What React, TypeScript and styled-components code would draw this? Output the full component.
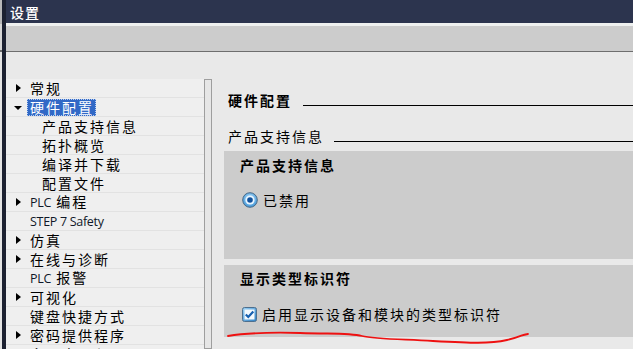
import styled, { createGlobalStyle } from 'styled-components'
import { ReactNode } from 'react'

const GlobalStyle = createGlobalStyle`
  html, body {
    margin: 0;
    padding: 0;
    overflow: hidden;
    background: #e9e9e9;
  }
  body {
    font-family: "Noto Sans CJK SC", "Noto Sans", sans-serif;
  }
`

const CJK = `"Noto Sans CJK SC", "Noto Sans", sans-serif`

interface NavItem {
  label: ReactNode
  arrow?: 'right' | 'down'
  child?: boolean
  selected?: boolean
}

function getNavItems(): NavItem[] {
  return [
    { label: '常规', arrow: 'right' },
    { label: '硬件配置', arrow: 'down', selected: true },
    { label: '产品支持信息', child: true },
    { label: '拓扑概览', child: true },
    { label: '编译并下载', child: true },
    { label: '配置文件', child: true },
    { label: <><Latin>PLC</Latin> 编程</>, arrow: 'right' },
    { label: <Latin>STEP 7 Safety</Latin> },
    { label: '仿真', arrow: 'right' },
    { label: '在线与诊断', arrow: 'right' },
    { label: <><Latin>PLC</Latin> 报警</> },
    { label: '可视化', arrow: 'right' },
    { label: '键盘快捷方式' },
    { label: '密码提供程序', arrow: 'right' },
    { label: '多用户工程', arrow: 'right' },
  ]
}

export default function App() {
  const navItems = getNavItems()
  return (
    <Page>
      <GlobalStyle />
      <Gutter />
      <Window>
        <TitleBar>
          <Title>设置</Title>
        </TitleBar>
        <Toolbar />
        <Body>
          <NavColumn>
            <NavList>
              {navItems.map((item, i) => (
                <NavRow key={i} $child={item.child}>
                  <Arrow>
                    {item.arrow === 'right' && <RightTriangle />}
                    {item.arrow === 'down' && <DownTriangle />}
                  </Arrow>
                  <NavLabel $selected={item.selected}>{item.label}</NavLabel>
                </NavRow>
              ))}
            </NavList>
            <ScrollThumb />
          </NavColumn>
          <Content>
            <SectionHeading>
              <HeadingText>硬件配置</HeadingText>
              <Rule />
            </SectionHeading>
            <SubHeading>
              <SubHeadingText>产品支持信息</SubHeadingText>
              <Rule />
            </SubHeading>
            <Group $height={108}>
              <GroupTitle>产品支持信息</GroupTitle>
              <OptionRow $gap={15}>
                <RadioIcon />
                <OptionText>已禁用</OptionText>
              </OptionRow>
            </Group>
            <Group $height={72} $top={6}>
              <GroupTitle $top={3}>显示类型标识符</GroupTitle>
              <OptionRow $gap={16}>
                <CheckIcon />
                <OptionText>启用显示设备和模块的类型标识符</OptionText>
              </OptionRow>
            </Group>
          </Content>
        </Body>
      </Window>
      <Annotation width="633" height="349" viewBox="0 0 633 349">
        <path
          d="M228 336 C 240 334, 262 332, 300 333 S 350 333, 362 336 S 395 339, 433 341 S 490 344, 507 340 S 520 335, 528 334"
          fill="none"
          stroke="#ee1111"
          strokeWidth="1.8"
          strokeLinecap="round"
        />
      </Annotation>
    </Page>
  )
}

function RadioIcon() {
  return (
    <svg width="16" height="16" viewBox="0 0 16 16">
      <defs>
        <radialGradient id="rg" cx="50%" cy="40%" r="60%">
          <stop offset="0" stopColor="#bfe6ff" />
          <stop offset="1" stopColor="#3d94d6" />
        </radialGradient>
      </defs>
      <circle cx="8" cy="8" r="7.3" fill="url(#rg)" stroke="#4a6a88" strokeWidth="1" />
      <circle cx="8" cy="8" r="4.6" fill="#eaf6ff" />
      <circle cx="8" cy="8" r="2.8" fill="#0f4f9a" />
    </svg>
  )
}

function CheckIcon() {
  return (
    <svg width="15" height="15" viewBox="0 0 15 15">
      <defs>
        <linearGradient id="cg" x1="0" y1="0" x2="1" y2="1">
          <stop offset="0" stopColor="#9dd2f5" />
          <stop offset="1" stopColor="#2d7fc4" />
        </linearGradient>
      </defs>
      <rect x="0.5" y="0.5" width="14" height="14" rx="2" fill="url(#cg)" stroke="#4d6f8e" />
      <rect x="2.5" y="2.5" width="10" height="10" fill="#f4f9fd" />
      <path d="M3.8 7.4 L6.3 10 L11.3 4.4" fill="none" stroke="#1760b0" strokeWidth="2.2" />
    </svg>
  )
}

const Page = styled.div`
  position: relative;
  display: flex;
  width: 633px;
  height: 349px;
  overflow: hidden;
`

const Gutter = styled.div`
  width: 2px;
  flex: none;
  background: linear-gradient(#b8b8b8 0 24px, #d6d6d6 24px 50px, #6e6e6e 50px 52px, #e4e4e4 52px);
`

const Window = styled.div`
  flex: 1;
  display: flex;
  flex-direction: column;
  border-left: 4px solid #1c2131;
  min-width: 0;
`

const TitleBar = styled.div`
  height: 23px;
  flex: none;
  background: #2c344e;
  display: flex;
  align-items: center;
  padding-left: 4px;
  border-bottom: 3px solid #eef0ef;
`

const Title = styled.span`
  color: #fff;
  font-family: ${CJK};
  font-size: 14px;
  font-weight: 500;
  letter-spacing: 1px;
  line-height: 1;
`

const Toolbar = styled.div`
  height: 25px;
  flex: none;
  background: #cccccc;
  border-bottom: 1px solid #6e6e6e;
`

const Body = styled.div`
  flex: 1;
  display: flex;
  min-height: 0;
`

const NavColumn = styled.div`
  width: 206px;
  flex: none;
  display: flex;
  padding-top: 27px;
  background: #e9e9e9;
`

const NavList = styled.div`
  width: 198px;
  background: #efefef;
`

const NavRow = styled.div<{ $child?: boolean }>`
  height: 19px;
  box-sizing: border-box;
  border-bottom: 1px solid #e2e2e2;
  display: flex;
  align-items: center;
  padding-left: ${({ $child }) => ($child ? 16 : 4)}px;
  font-family: ${CJK};
  font-size: 14px;
  letter-spacing: 2px;
  color: #000;
  white-space: nowrap;
`

const Arrow = styled.span`
  width: 16px;
  height: 19px;
  flex: none;
  display: flex;
  align-items: center;
  justify-content: center;
`

const RightTriangle = styled.span`
  width: 0;
  height: 0;
  border-left: 5px solid #000;
  border-top: 4px solid transparent;
  border-bottom: 4px solid transparent;
  margin-left: 1px;
`

const DownTriangle = styled.span`
  width: 0;
  height: 0;
  border-top: 4px solid #000;
  border-left: 4px solid transparent;
  border-right: 4px solid transparent;
  margin-top: 1px;
`

const NavLabel = styled.span<{ $selected?: boolean }>`
  line-height: 15px;
  padding: 0 1px 0 2px;
  border: 1px dotted ${({ $selected }) => ($selected ? '#b8cdf0' : 'transparent')};
  margin-left: 1px;
  background: ${({ $selected }) => ($selected ? '#3169c6' : 'transparent')};
  color: ${({ $selected }) => ($selected ? '#fff' : '#000')};
`

const Latin = styled.span`
  font-family: "Open Sans", "Liberation Sans", sans-serif;
  font-size: 12.5px;
  letter-spacing: -0.3px;
  color: #101828;
`

const ScrollThumb = styled.div`
  width: 6px;
  border: 1px solid #9e9e9e;
  background: #e6e6e6;
`

const Content = styled.div`
  flex: 1;
  min-width: 0;
  background: #e9e9e9;
  padding: 38px 0 0 12px;
  display: flex;
  flex-direction: column;
`

const SectionHeading = styled.div`
  height: 20px;
  flex: none;
  display: flex;
  padding-left: 4px;
`

const HeadingText = styled.span`
  font-family: ${CJK};
  font-size: 14px;
  font-weight: 700;
  letter-spacing: 2px;
  line-height: 20px;
  margin-right: 11px;
`

const SubHeading = styled.div`
  height: 20px;
  flex: none;
  display: flex;
  padding-left: 4px;
  margin-top: 16px;
`

const SubHeadingText = styled.span`
  font-family: ${CJK};
  font-size: 14px;
  letter-spacing: 2px;
  line-height: 20px;
  margin-right: 10px;
`

const Rule = styled.div`
  flex: 1;
  height: 1px;
  background: #000;
  align-self: flex-end;
  margin-bottom: 4px;
`

const Group = styled.div<{ $height: number; $top?: number }>`
  height: ${({ $height }) => $height}px;
  margin-top: ${({ $top }) => $top ?? 5}px;
  background: #cccccc;
  padding: 0 0 0 16px;
  box-sizing: border-box;
  flex: none;
`

const GroupTitle = styled.div<{ $top?: number }>`
  padding-top: ${({ $top }) => $top ?? 4}px;
  font-family: ${CJK};
  font-size: 14px;
  font-weight: 700;
  letter-spacing: 2px;
  line-height: 20px;
  color: #000;
`

const OptionRow = styled.div<{ $gap: number }>`
  margin-top: ${({ $gap }) => $gap}px;
  height: 20px;
  display: flex;
  align-items: center;
  gap: 5px;
  padding-left: 2px;
`

const OptionText = styled.span`
  font-family: ${CJK};
  font-size: 14px;
  letter-spacing: 2px;
  line-height: 20px;
  color: #000;
`

const Annotation = styled.svg`
  position: absolute;
  left: 0;
  top: 0;
  pointer-events: none;
`
